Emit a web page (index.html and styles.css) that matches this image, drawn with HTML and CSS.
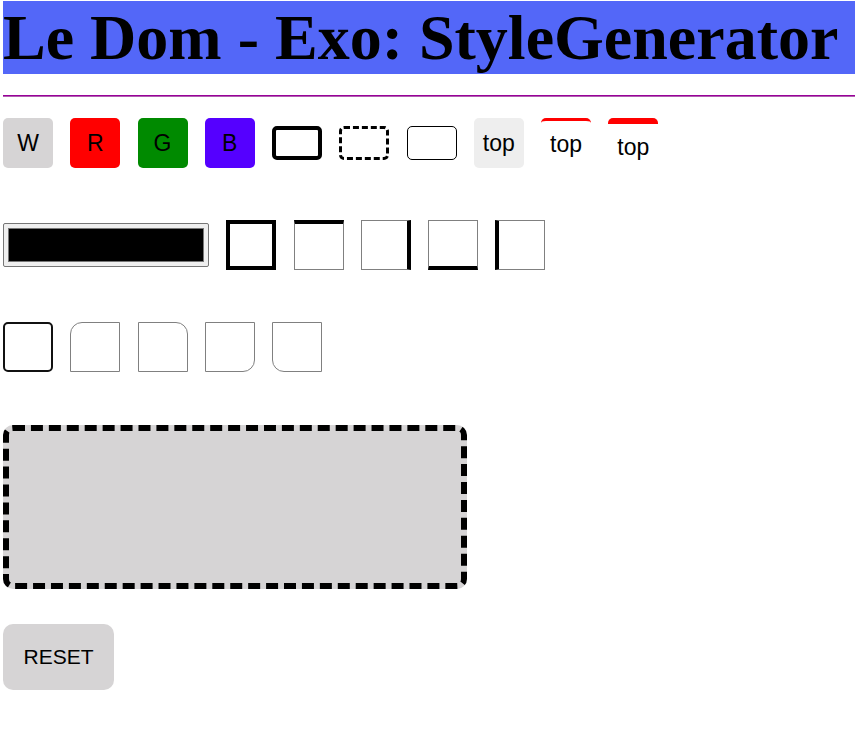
FILE: index.html
```html
<!DOCTYPE html>
<html lang="fr">
<head>
<meta charset="utf-8">
<title>Le Dom - Exo: StyleGenerator</title>
<link rel="stylesheet" href="styles.css">
</head>
<body>
<h1 class="title">Le Dom - Exo: StyleGenerator</h1>
<hr class="sep">
<div class="row">
  <div class="btn bg-w">W</div>
  <div class="btn bg-r">R</div>
  <div class="btn bg-g">G</div>
  <div class="btn bg-b">B</div>
  <div class="frame frame-thick"></div>
  <div class="frame frame-dashed"></div>
  <div class="frame frame-thin"></div>
  <div class="btn bg-light">top</div>
  <div class="btn top-thin">top</div>
  <div class="btn top-thick">top</div>
</div>
<div class="row">
  <div class="color-input"><div class="swatch"></div></div>
  <div class="box box-all"></div>
  <div class="box box-top"></div>
  <div class="box box-right"></div>
  <div class="box box-bottom"></div>
  <div class="box box-left"></div>
</div>
<div class="row">
  <div class="box r-all"></div>
  <div class="box r-tl"></div>
  <div class="box r-tr"></div>
  <div class="box r-br"></div>
  <div class="box r-bl"></div>
</div>
<div class="preview"></div>
<button class="reset">RESET</button>
</body>
</html>
```
FILE: styles.css
```css
html, body {
  margin: 0;
  padding: 0;
  background: #fff;
}
body {
  padding: 1px 0 0 3px;
  font-family: "Liberation Sans", Arial, sans-serif;
}
.title {
  margin: 0;
  background: #5367f8;
  font-family: "Liberation Serif", "Times New Roman", serif;
  font-weight: bold;
  font-size: 64px;
  line-height: 73px;
  color: #000;
  white-space: nowrap;
}
.sep {
  margin: 21px 0 21px 0;
  border: none;
  border-top: 1px solid #990099;
  border-bottom: 1px solid #b060b0;
  height: 0;
}
.row {
  display: flex;
  align-items: center;
  gap: 17.25px;
  height: 50px;
  margin-bottom: 52px;
}
.btn {
  box-sizing: border-box;
  width: 50px;
  height: 50px;
  border-radius: 5px;
  display: flex;
  align-items: center;
  justify-content: center;
  font-size: 23px;
  color: #000;
}
.bg-w { background: #d6d4d5; }
.bg-r { background: #ff0000; }
.bg-g { background: #008a00; }
.bg-b { background: #5500ff; }
.bg-light { background: #eeeeee; }
.top-thin { border-top: 3px solid #ff0000; background: #fff; }
.top-thick { border-top: 6px solid #ff0000; background: #fff; padding-top: 2px; }
.frame {
  box-sizing: border-box;
  width: 50px;
  height: 34px;
  border-radius: 5px;
}
.frame-thick { border: 4px solid #000; }
.frame-dashed { border: 3.5px dashed #000; }
.frame-thin { border: 1px solid #000; }
.color-input {
  box-sizing: border-box;
  width: 206px;
  height: 44px;
  border: 1px solid #767676;
  border-radius: 2px;
  background: #efefef;
  padding: 4px;
}
.swatch {
  box-sizing: border-box;
  width: 100%;
  height: 100%;
  background: #000;
  border: 1px solid #777;
}
.box {
  box-sizing: border-box;
  width: 50px;
  height: 50px;
  border: 1px solid #808080;
}
.box-all { border: 4px solid #000; }
.box-top { border-top: 4px solid #000; }
.box-right { border-right: 4px solid #000; }
.box-bottom { border-bottom: 4px solid #000; }
.box-left { border-left: 4px solid #000; }
.r-all { border: 2px solid #111; border-radius: 5px; }
.r-tl { border-top-left-radius: 12px; }
.r-tr { border-top-right-radius: 12px; }
.r-br { border-bottom-right-radius: 12px; }
.r-bl { border-bottom-left-radius: 12px; }
.preview {
  box-sizing: border-box;
  width: 464px;
  height: 164px;
  margin-top: 53px;
  background: #d6d4d5;
  border: 6px dashed #000;
  border-radius: 10px;
}
.reset {
  display: block;
  margin-top: 35px;
  width: 111px;
  height: 66px;
  border: none;
  border-radius: 10px;
  background: #d6d4d5;
  font-family: "Liberation Sans", Arial, sans-serif;
  font-size: 21px;
  color: #000;
  padding: 0;
}
```
